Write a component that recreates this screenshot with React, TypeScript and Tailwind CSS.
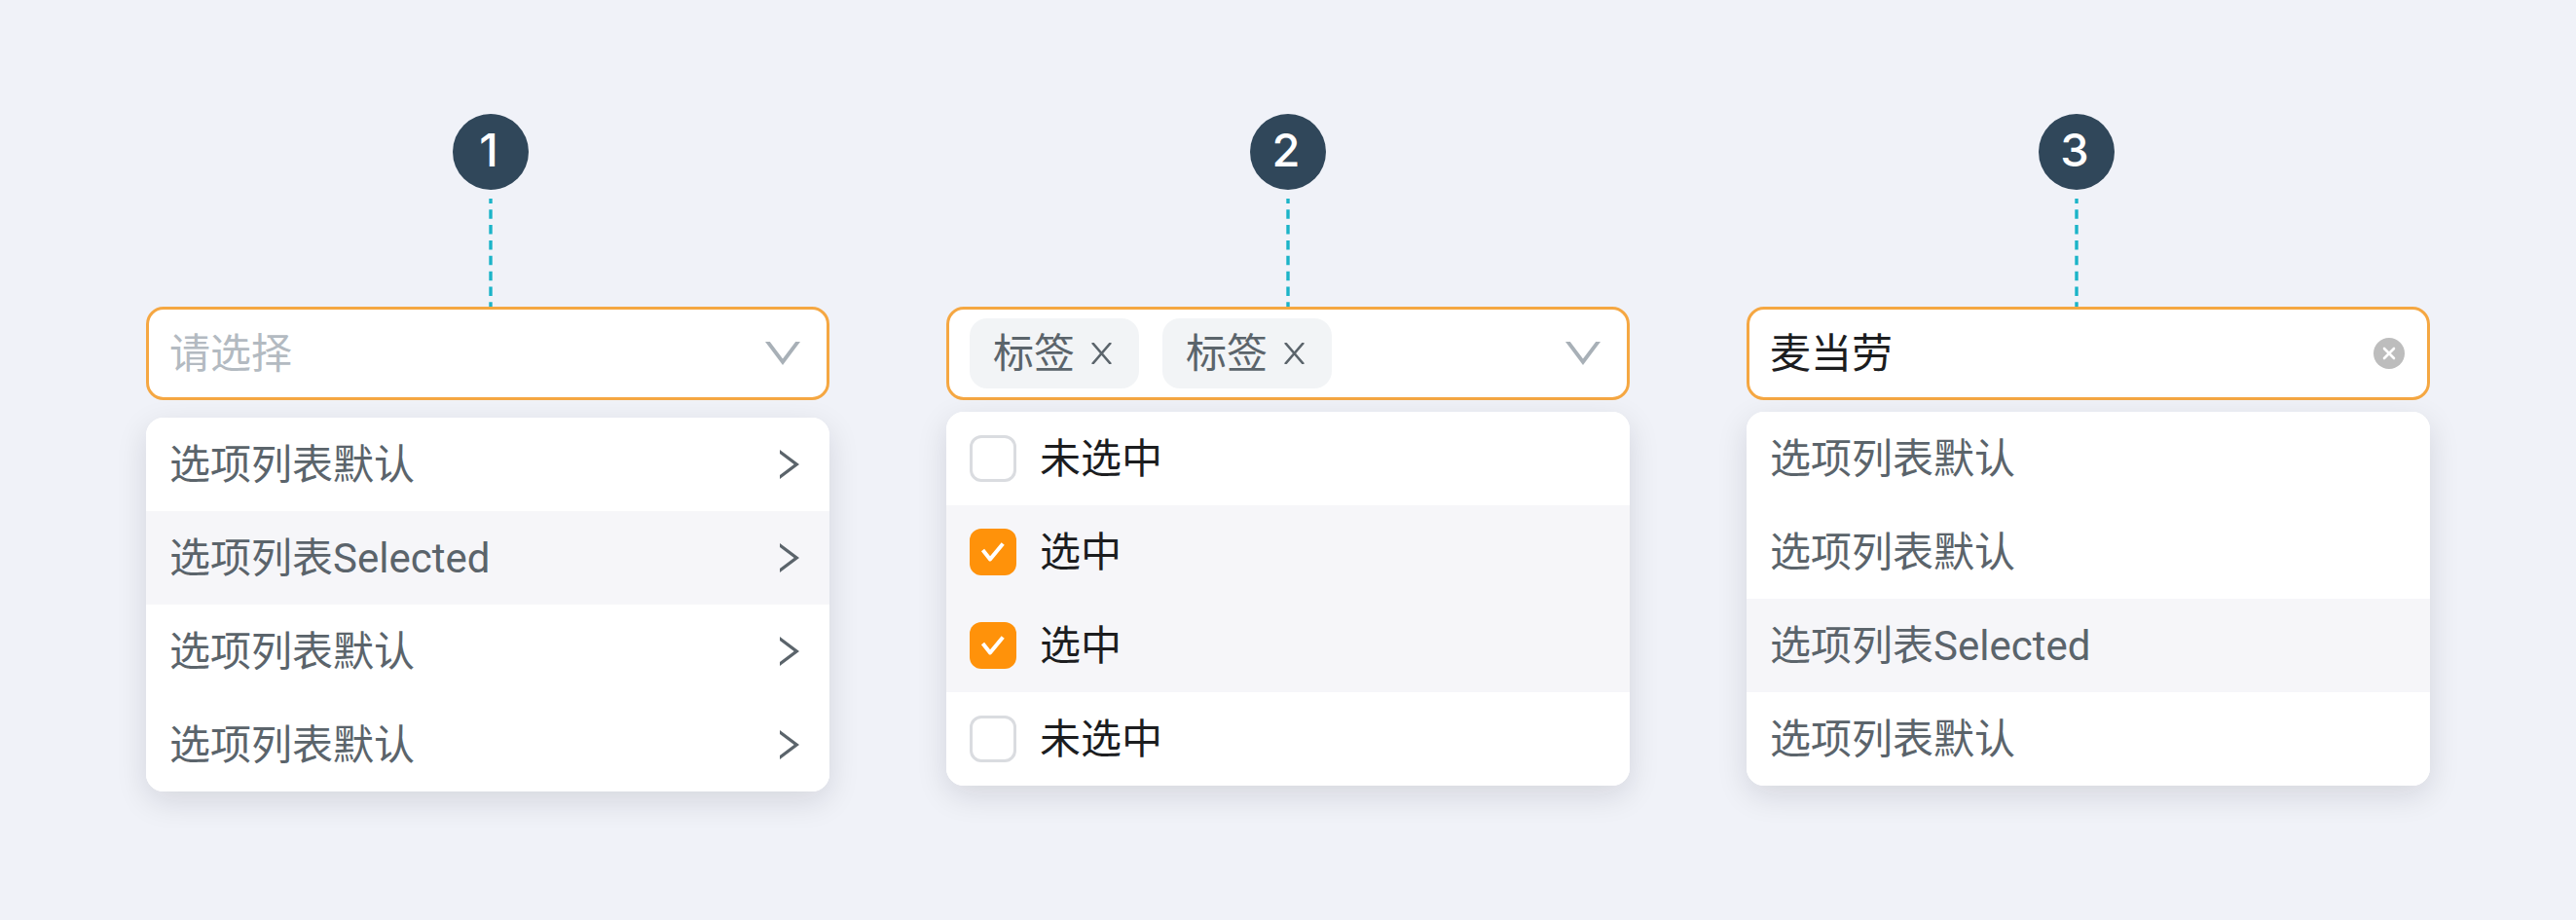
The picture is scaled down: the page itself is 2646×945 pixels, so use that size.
import type { ReactNode } from "react";

function Marker({ n, pad }: { n: number; pad: string }) {
  return (
    <div className={`flex flex-col items-start ${pad}`}>
      <div className="flex h-[78px] w-[78px] items-center justify-center rounded-full bg-[#30475a] pr-[4px] pb-[5px] font-['Inter',sans-serif] text-[47px] leading-none font-medium text-white">
        {n}
      </div>
      <svg className="mt-[9px] h-[111px] w-[78px]" viewBox="0 0 78 111" fill="none">
        <path d="M39 0V111" stroke="#1bb4c8" strokeWidth="3.4" strokeDasharray="9.5 6.35" strokeDashoffset="4.6" />
      </svg>
    </div>
  );
}

function Field({ children }: { children: ReactNode }) {
  return (
    <div className="flex h-24 items-center rounded-[18px] border-3 border-[#f5a742] bg-white px-[21px]">{children}</div>
  );
}

function Menu({ gap, children }: { gap: string; children: ReactNode }) {
  return (
    <div className={`${gap} overflow-hidden rounded-[18px] bg-white shadow-[0_10px_32px_rgba(20,20,32,0.12)]`}>
      {children}
    </div>
  );
}

function Row({ active = false, children }: { active?: boolean; children: ReactNode }) {
  return <div className={`flex h-24 items-center px-6 ${active ? "bg-[#f6f6f9]" : "bg-white"}`}>{children}</div>;
}

function Down() {
  return (
    <svg className="mr-[6.5px] ml-auto h-6 w-9" viewBox="0 0 36 24" fill="#a8b0b7">
      <path d="M0 0H4.8L18 17.6 31.2 0H36L18 24Z" />
    </svg>
  );
}

function Right() {
  return (
    <svg className="mr-[7px] ml-auto h-[30px] w-5" viewBox="0 0 20 30" fill="#5b646b">
      <path d="M0 0 20 15 0 30V26.1L14.6 15 0 3.9Z" />
    </svg>
  );
}

function Tag() {
  return (
    <div className="mr-6 flex h-[72px] w-[174px] items-center rounded-[18px] bg-[#f2f4f6] pl-6 text-[#5b646b]">
      <span className="pt-[2px]">标签</span>
      <svg className="ml-[17px] h-[22px] w-[21px]" viewBox="0 0 21 22" fill="none" stroke="#5b646b" strokeWidth="2.6">
        <path d="M1 0 20 22M20 0 1 22" />
      </svg>
    </div>
  );
}

function Check({ on }: { on: boolean }) {
  if (!on) return <div className="mr-6 h-12 w-12 rounded-xl border-3 border-[#dadce0] bg-white" />;
  return (
    <div className="mr-6 h-12 w-12 rounded-xl bg-[#ff920a]">
      <svg className="h-12 w-12" viewBox="0 0 48 48" fill="none" stroke="#fff" strokeWidth="4">
        <path d="M13.5 22 21 31.5 34.2 15.5" strokeLinejoin="round" />
      </svg>
    </div>
  );
}

const cascade = ["选项列表默认", "选项列表Selected", "选项列表默认", "选项列表默认"];
const multi = [false, true, true, false];
const search = ["选项列表默认", "选项列表默认", "选项列表Selected", "选项列表默认"];

export default function App() {
  return (
    <div className="flex h-[945px] w-[2646px] gap-[120px] bg-[#f0f2f8] px-[150px] pt-[117px] font-['Roboto','Noto_Sans_CJK_SC',sans-serif] text-[42px] leading-[60px] text-[#5b646b]">
      <section className="w-[702px]">
        <Marker n={1} pad="pl-[315px]" />
        <Field>
          <span className="pt-[2px] text-[#b3bac1]">请选择</span>
          <Down />
        </Field>
        <Menu gap="mt-[18px]">
          {cascade.map((t, i) => (
            <Row key={i} active={i === 1}>
              <span className="pt-[2px]">{t}</span>
              <Right />
            </Row>
          ))}
        </Menu>
      </section>
      <section className="w-[702px]">
        <Marker n={2} pad="pl-[312px]" />
        <Field>
          <Tag />
          <Tag />
          <Down />
        </Field>
        <Menu gap="mt-3">
          {multi.map((on, i) => (
            <Row key={i} active={on}>
              <Check on={on} />
              <span className="pt-[2px] text-[#1c1d1f]">{on ? "选中" : "未选中"}</span>
            </Row>
          ))}
        </Menu>
      </section>
      <section className="w-[702px]">
        <Marker n={3} pad="pl-[300px]" />
        <Field>
          <span className="pt-[2px] text-[#1c1d1f]">麦当劳</span>
          <svg className="mr-[2px] ml-auto h-8 w-8" viewBox="0 0 32 32" fill="none">
            <circle cx="16" cy="16" r="16" fill="#bdbdbd" />
            <path d="M11 11 21 21M21 11 11 21" stroke="#fff" strokeWidth="2.6" strokeLinecap="round" />
          </svg>
        </Field>
        <Menu gap="mt-3">
          {search.map((t, i) => (
            <Row key={i} active={i === 2}>
              <span className="pt-[2px]">{t}</span>
            </Row>
          ))}
        </Menu>
      </section>
    </div>
  );
}
